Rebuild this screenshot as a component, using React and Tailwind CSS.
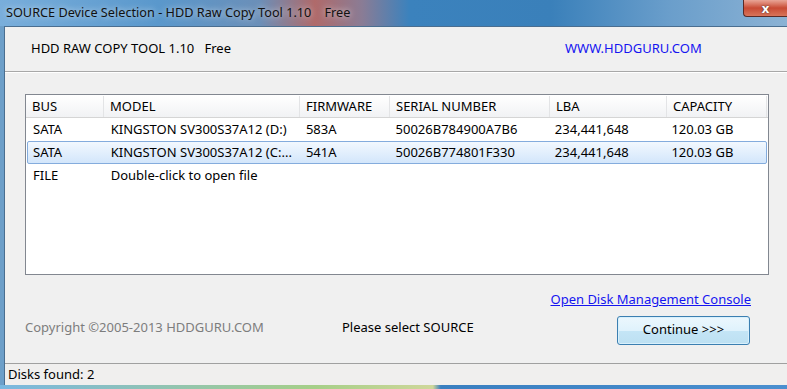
import React from "react";

const cols = [
  { label: "BUS", w: "w-[78px]" },
  { label: "MODEL", w: "w-[196px]" },
  { label: "FIRMWARE", w: "w-[90px]" },
  { label: "SERIAL NUMBER", w: "w-[160px]" },
  { label: "LBA", w: "w-[117px]" },
  { label: "CAPACITY", w: "w-[100px]" },
];

const rows = [
  ["SATA", "KINGSTON SV300S37A12 (D:)", "583A", "50026B784900A7B6", "234,441,648", "120.03 GB"],
  ["SATA", "KINGSTON SV300S37A12 (C:...", "541A", "50026B774801F330", "234,441,648", "120.03 GB"],
  ["FILE", "Double-click to open file", "", "", "", ""],
];

function Row({ cells, selected }) {
  return (
    <div
      className={
        "flex h-[23px] items-center mx-[1px] " +
        (selected
          ? "rounded-[2px] border border-[#84acdd] bg-gradient-to-b from-[#f2f8fe] to-[#d3e6fb]"
          : "border border-transparent")
      }
    >
      {cells.map((c, i) => (
        <div key={i} className={cols[i].w + " pl-[5px] whitespace-nowrap overflow-hidden"}>
          {c}
        </div>
      ))}
    </div>
  );
}

export default function App() {
  return (
    <div
      className="w-[787px] h-[389px] overflow-hidden flex flex-col text-[13px] text-black bg-[#6d9fc9]"
      style={{ fontFamily: '"Noto Sans", "Open Sans", sans-serif' }}
    >
      {/* title bar */}
      <div className="relative h-[26px] shrink-0 bg-[linear-gradient(90deg,#79aedb_0%,#5a98cc_20%,#6b8fb8_33%,#b06a6a_40%,#8a7c95_46%,#3b82bd_52%,#3a80ba_70%,#6a9ecb_85%,#8bb2d4_100%)]">
        <div className="absolute left-[6px] top-[3px] text-[12.7px] text-[#111] [text-shadow:0_0_6px_rgba(255,255,255,0.8)] whitespace-pre">
          SOURCE Device Selection - HDD Raw Copy Tool 1.10    Free
        </div>
        <div className="absolute right-0 top-0 w-[44px] h-[17px] rounded-bl-[4px] border border-t-0 border-r-0 border-[#5a2a26] bg-gradient-to-b from-[#e8a597] via-[#c84a34] to-[#d8745a] flex items-center justify-center">
          <span className="text-white font-bold text-[13px] leading-none [text-shadow:0_0_2px_#333]">x</span>
        </div>
      </div>

      <div className="flex-1 flex flex-col ml-[4px] border-t border-l border-[#4a6e90] bg-[#f0f0f0]">
        {/* header */}
        <div className="h-[44px] shrink-0 flex items-center pl-[26px]">
          <span className="w-[534px] whitespace-pre">HDD RAW COPY TOOL 1.10   Free</span>
          <span className="text-[#1515f0]">WWW.HDDGURU.COM</span>
        </div>
        <div className="h-[2px] shrink-0 border-t border-[#a8a8a8] bg-white" />

        {/* list */}
        <div className="mt-[21px] ml-[20px] w-[744px] h-[181px] shrink-0 border border-[#828790] bg-white pt-[1px]">
          <div className="flex h-[22px] items-center bg-gradient-to-b from-white to-[#f1f2f4] border-b border-[#d5d5d5]">
            {cols.map((c, i) => (
              <div key={i} className={c.w + " h-full flex items-center pl-[6px] border-r border-[#e3e4e6]"}>
                {c.label}
              </div>
            ))}
          </div>
          {rows.map((r, i) => (
            <Row key={i} cells={r} selected={i === 1} />
          ))}
        </div>

        {/* footer */}
        <div className="flex-1 flex">
          <div className="flex flex-col justify-end pl-[20px] pb-[26px] w-[337px]">
            <span className="text-[#7d7d7d]">Copyright ©2005-2013 HDDGURU.COM</span>
          </div>
          <div className="flex flex-col justify-end pb-[26px] w-[210px]">
            <span>Please select SOURCE</span>
          </div>
          <div className="flex flex-col items-end pt-[15px] w-[200px] whitespace-nowrap">
            <span className="text-[#1515f0] underline mr-[1px]">Open Disk Management Console</span>
            <button className="mt-[6px] mr-[2px] w-[133px] h-[29px] rounded-[3px] border border-[#3c7fb1] bg-[linear-gradient(180deg,#ecf7fd_0%,#dff2fc_50%,#c4e5f6_51%,#bde0f2_100%)] text-[13px] shadow-[inset_0_0_0_1px_#d8f0fc]">
              Continue &gt;&gt;&gt;
            </button>
          </div>
        </div>

        {/* status bar */}
        <div className="h-[22px] shrink-0 border-t border-[#a0a0a0] bg-[#f0efee] flex items-center pl-[3px]">
          Disks found: 2
        </div>
      </div>
      <div className="h-[4px] shrink-0 bg-[linear-gradient(90deg,#7ab7e0_0%,#a6cf88_40%,#cfd79a_55%,#3a7fc0_56%,#4b8fcf_100%)]" />
    </div>
  );
}
